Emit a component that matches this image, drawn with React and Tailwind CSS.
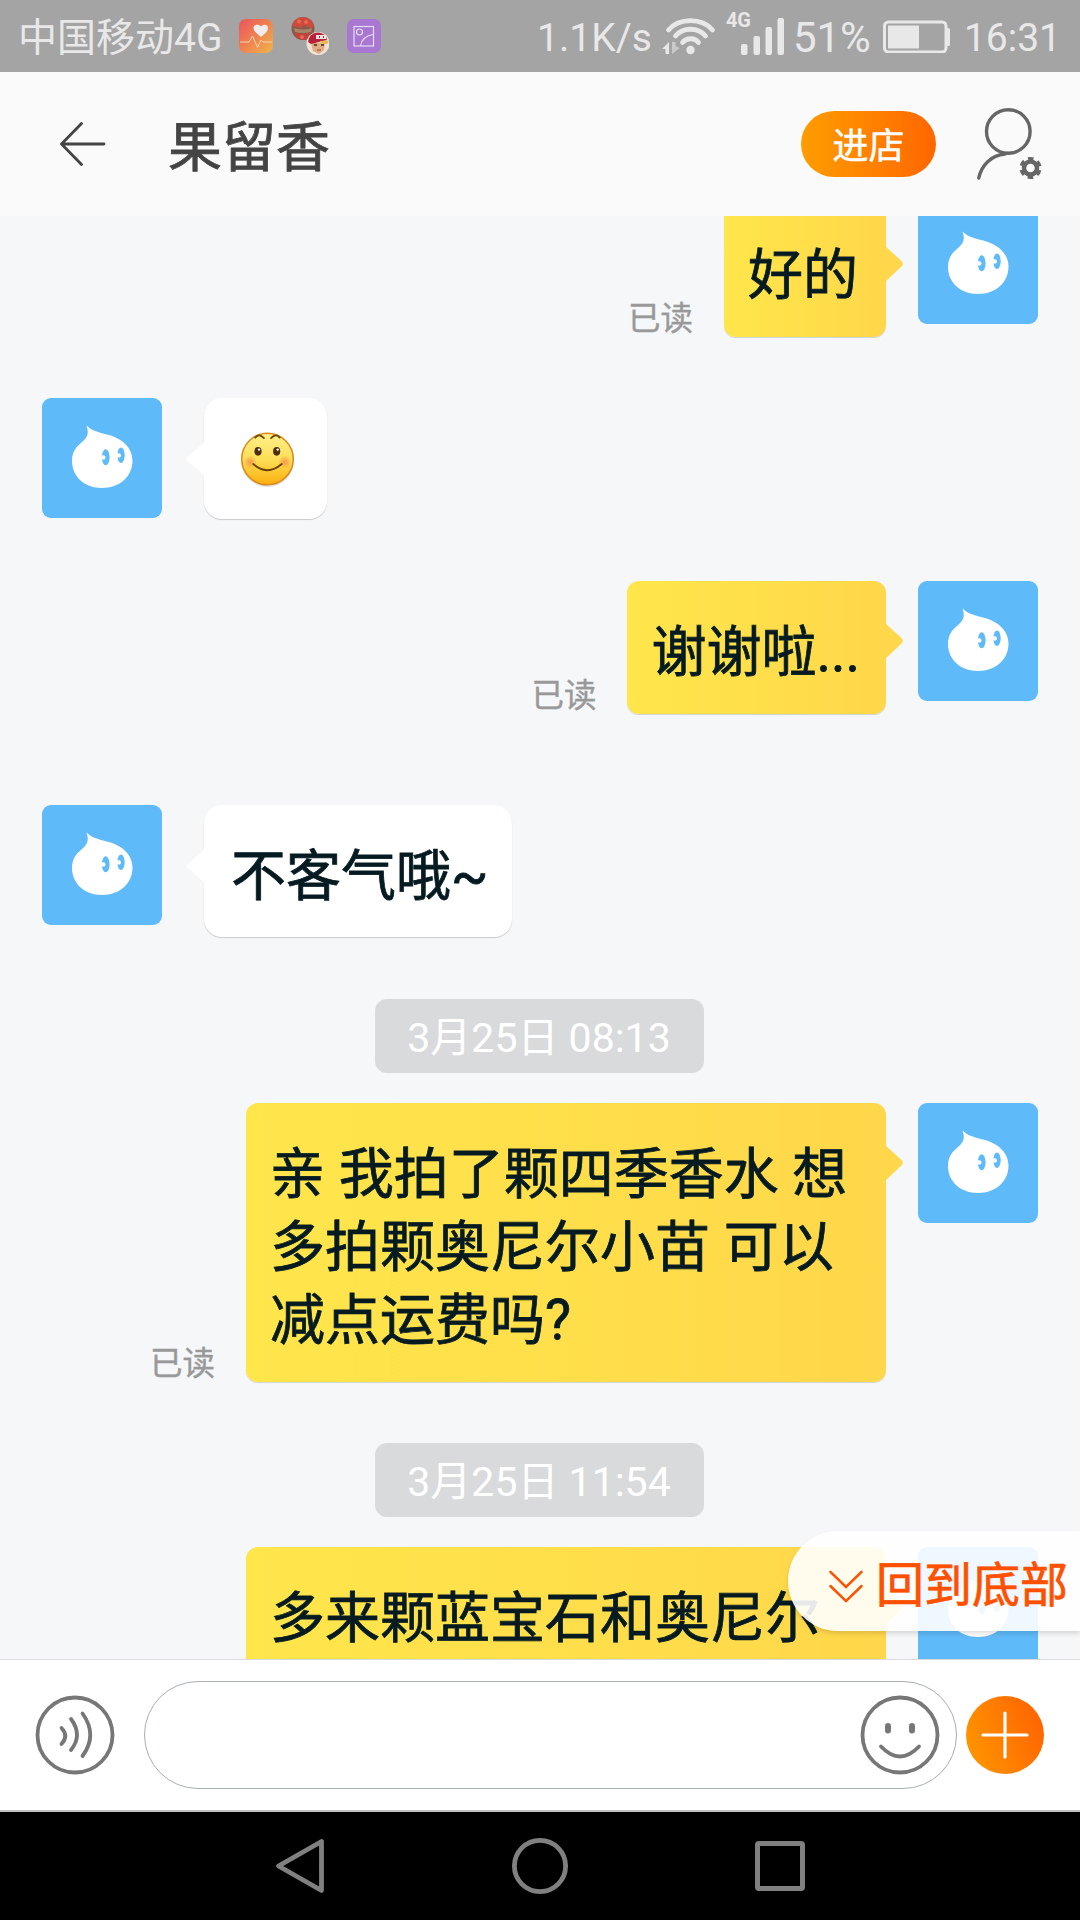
import React from "react";

const MESSAGES = [
  { id: 1, type: "out", text: ["好的"], read: true, gap: "-mt-3" },
  { id: 2, type: "in", emoji: true, gap: "mt-[61px]" },
  { id: 3, type: "out", text: ["谢谢啦..."], read: true, gap: "mt-[62px]" },
  { id: 4, type: "in", text: ["不客气哦~"], gap: "mt-[91px]" },
  { id: 5, type: "time", text: "3月25日 08:13", gap: "mt-[62px]" },
  {
    id: 6,
    type: "out",
    text: ["亲 我拍了颗四季香水 想", "多拍颗奥尼尔小苗 可以", "减点运费吗?"],
    read: true,
    wide: true,
    gap: "mt-[30px]",
  },
  { id: 7, type: "time", text: "3月25日 11:54", gap: "mt-[61px]" },
  { id: 8, type: "out", text: ["多来颗蓝宝石和奥尼尔"], wide: true, gap: "mt-[30px]" },
];

function Avatar() {
  return (
    <svg viewBox="0 0 120 120" className="size-[120px] shrink-0 rounded-[9px] bg-[#5fbaf9]">
      <path
        d="M44.5 27.5C49 32 55 34 63 36C79 39.500 90.500 49 90.500 62.500C90.500 79 77 90 60 90C43 90 30 79 30 63C30 54 34 49 40 44C46 39 47 35 44.500 27.500Z"
        fill="#fff"
      />
      <g fill="#5fbaf9">
        <ellipse cx="63.700" cy="59.300" rx="3.900" ry="8" />
        <ellipse cx="79" cy="57.300" rx="3.700" ry="7.800" />
      </g>
      <g fill="#fff">
        <path d="M58.500 57L62.500 57.500Q64.500 59.500 62.500 61.500L58.500 61.500Z" />
        <path d="M74 55L78 55.500Q80 57.500 78 59.500L74 59.500Z" />
      </g>
    </svg>
  );
}

function SmileEmoji() {
  return (
    <svg viewBox="0 0 54 54" className="mt-0.5 ml-[3px] size-[55px]">
      <defs>
        <linearGradient id="face" x1="0" y1="0" x2="0" y2="1">
          <stop offset="0" stopColor="#fdf08a" />
          <stop offset="0.5" stopColor="#fcdf58" />
          <stop offset="1" stopColor="#fcae0c" />
        </linearGradient>
        <radialGradient id="cheek">
          <stop offset="0" stopColor="#f9874a" stopOpacity="0.8" />
          <stop offset="1" stopColor="#f9874a" stopOpacity="0" />
        </radialGradient>
      </defs>
      <circle cx="27" cy="28" r="26" fill="#000" opacity="0.12" />
      <circle cx="27" cy="26.500" r="25.300" fill="url(#face)" stroke="#dc8a1b" strokeWidth="1.500" />
      <circle cx="10" cy="29.500" r="6.500" fill="url(#cheek)" />
      <circle cx="44" cy="29.500" r="6.500" fill="url(#cheek)" />
      <ellipse cx="17.700" cy="19" rx="3.500" ry="4.300" fill="#4d2d07" />
      <ellipse cx="36" cy="19" rx="3.500" ry="4.300" fill="#4d2d07" />
      <circle cx="18.700" cy="17.300" r="1.200" fill="#fff" />
      <circle cx="37" cy="17.300" r="1.200" fill="#fff" />
      <g fill="none" stroke="#6e4509" strokeLinecap="round">
        <path d="M15 5.500Q18.500 1 23.500 6" strokeWidth="1.800" />
        <path d="M30.500 6Q35.500 1 39 5.500" strokeWidth="1.800" />
        <path d="M13 31.500Q27 43.500 41 31.500" strokeWidth="1.900" />
      </g>
    </svg>
  );
}

function Outgoing({ m }) {
  return (
    <div className={`flex items-start justify-end pr-[42px] ${m.gap}`}>
      {m.read && (
        <span className="mr-[31px] -mb-px self-end text-[32.500px] leading-[38px] text-[#999] [-webkit-text-stroke:0.400px]">
          已读
        </span>
      )}
      <div
        className={`relative mr-8 rounded-xl bg-linear-to-r from-[#ffe64b] to-[#ffd74a] pt-[35px] pr-[26px] pb-[25px] pl-6 shadow-[0_1px_1px_rgba(0,0,0,0.15)] ${
          m.wide ? "w-[640px]" : "min-w-[162px]"
        }`}
      >
        {m.text.map((line) => (
          <p
            key={line}
            className="text-[55px] leading-[73px] whitespace-nowrap text-[#051b21] [-webkit-text-stroke:0.800px]"
          >
            {line}
          </p>
        ))}
        <svg viewBox="0 0 18 36" className="absolute top-[42px] -right-[17px] h-9 w-[18px]">
          <path d="M0 0L16.500 15Q19 18 16.500 20.500L0 36Z" fill="#ffd74a" />
        </svg>
      </div>
      <Avatar />
    </div>
  );
}

function Incoming({ m }) {
  return (
    <div className={`flex items-start pl-[42px] ${m.gap}`}>
      <Avatar />
      <div
        className={`relative ml-[42px] rounded-[18px] bg-white shadow-[0_1px_1px_rgba(0,0,0,0.18)] ${
          m.emoji
            ? "flex h-[121px] w-[123px] items-center justify-center"
            : "h-[132px] w-[308px] pt-[35px] pl-[27px]"
        }`}
      >
        {m.emoji ? (
          <SmileEmoji />
        ) : (
          <p className="text-[55px] leading-[73px] whitespace-nowrap text-[#051b21] [-webkit-text-stroke:0.800px]">
            {m.text}
          </p>
        )}
        <svg viewBox="0 0 19 34" className="absolute top-11 -left-[18px] h-[34px] w-[19px]">
          <path d="M19 0L1 15.500Q0 17 1 18.500L19 34Z" fill="#fff" />
        </svg>
      </div>
    </div>
  );
}

function TimeStamp({ m }) {
  return (
    <div className={`flex justify-center pr-0.5 ${m.gap}`}>
      <span className="h-[74px] w-[329px] rounded-xl bg-[#d9dadc] pt-px text-center text-[41px] leading-[76px] whitespace-nowrap text-white">
        {m.text}
      </span>
    </div>
  );
}

function StatusBar() {
  return (
    <div className="flex h-[72px] shrink-0 items-center bg-[#a4a4a4] text-[#e8e8e8]">
      <span className="ml-[18px] w-[221px] pt-[5px] text-[39px] leading-[67px] whitespace-nowrap">中国移动4G</span>
      <svg viewBox="0 0 34 34" className="size-[34px]">
        <defs>
          <linearGradient id="health" x1="0" y1="0" x2="1" y2="1">
            <stop offset="0" stopColor="#e9535d" />
            <stop offset="0.5" stopColor="#ef8350" />
            <stop offset="1" stopColor="#efb44b" />
          </linearGradient>
        </defs>
        <rect width="34" height="34" rx="7" fill="url(#health)" />
        <path d="M22 18C17 14 14.500 12 14.500 8.800C14.500 5.500 19.500 4.500 22 7.500C24.500 4.500 29 5.500 29 8.800C29 12 27 14 22 18Z" fill="#eee" />
        <path d="M1 23H10L13.500 17L18.500 28.500L22 21L24 23H33" fill="none" stroke="#f8d3ae" strokeWidth="1" />
      </svg>
      <svg viewBox="0 0 38 38" className="ml-[18px] size-[38px]">
        <circle cx="12" cy="11.500" r="11.500" fill="#8a5b49" />
        <path d="M1 9Q3 1 12 0Q21 1 23 9L19 11L14 8L9 11L4 9Z" fill="#cf4a3c" />
        <path d="M3 18L8 15L12 18L17 15L20 19Q12 27 3 18Z" fill="#c5413a" />
        <path d="M3 11Q12 14 21 11L20 15Q12 17 4 15Z" fill="#a88569" />
        <g fill="#e96a51">
          <circle cx="8" cy="4.500" r="2" />
          <circle cx="15" cy="5" r="2" />
          <circle cx="11" cy="20" r="2" />
        </g>
        <circle cx="27" cy="26.500" r="11.500" fill="#eee3d4" />
        <path d="M20 26H34L33 33L28 37L22 34Z" fill="#e3ab83" />
        <path d="M17 25Q18 16 27 15.500Q35 16 36 23L20 27Z" fill="#b8213a" />
        <path d="M29 24L38 23.500L36 27L30 27Z" fill="#e8b957" />
        <path d="M25 20H35" stroke="#f3e5e0" strokeWidth="4" />
        <path d="M28 20H29M32 20H33" stroke="#b8213a" strokeWidth="2" />
        <path d="M23 28H26M30 28H33" stroke="#43281f" strokeWidth="1.500" />
        <path d="M26 33H30" stroke="#9a5140" />
      </svg>
      <svg viewBox="0 0 34 34" className="ml-[18px] size-[34px]" fill="none" stroke="#eadcf4" strokeWidth="1.200">
        <rect width="34" height="34" rx="7" fill="#a777d2" stroke="none" />
        <rect x="7" y="7.500" width="19.500" height="19.500" />
        <circle cx="12.500" cy="13" r="3" />
        <path d="M13.500 27Q15 17 26.500 15.500" />
      </svg>

      <span className="ml-auto pt-1 text-[39px] leading-[68px]">1.1K/s</span>
      <svg viewBox="0 0 54 38" className="ml-[10px] h-[38px] w-[54px]" fill="none" stroke="#e8e8e8" strokeWidth="4.800" strokeLinecap="round">
        <path d="M6.500 13C17 .5 40 .5 50.500 13" />
        <path d="M13.500 19C21 10 36 10 43.500 19" />
        <path d="M20.500 25.500C24.500 20.500 33 20.500 36.500 25.500" />
        <circle cx="28.500" cy="33" r="4.200" fill="#e8e8e8" stroke="none" />
        <path d="M7 25V37H3.500V32H0Z" fill="#e8e8e8" stroke="none" />
        <path d="M10 37V25H13.500V29L17.500 31Z" fill="#cacaca" stroke="none" />
      </svg>
      <div className="ml-[10px] flex h-[43px] w-[59px] items-start self-start pt-3">
        <span className="w-[15px] text-[20px] leading-[17px] font-bold">4G</span>
        <svg viewBox="0 0 44 37" className="mt-[6px] h-[37px] w-11 shrink-0" fill="#e8e8e8">
          <rect x="0" y="26" width="6.500" height="11" rx="2" />
          <rect x="12.500" y="18" width="6.500" height="19" rx="2" />
          <rect x="24.500" y="9" width="6.500" height="28" rx="2" />
          <rect x="36.500" y="0" width="6.500" height="37" rx="2" />
        </svg>
      </div>
      <span className="ml-2 pt-1 text-[42px] leading-[68px]">51%</span>
      <svg viewBox="0 0 67 34" className="ml-3 h-[34px] w-[67px]" fill="#e8e8e8">
        <rect x="1.500" y="3" width="61.500" height="30" rx="4" fill="none" stroke="#e8e8e8" strokeWidth="3" />
        <rect x="5" y="6.500" width="31" height="23" />
        <rect x="63" y="9" width="4" height="18" rx="1.500" />
      </svg>
      <span className="mr-[19px] ml-[14px] pt-1 text-[39px] leading-[68px]">16:31</span>
    </div>
  );
}

function Header() {
  return (
    <header className="flex h-36 shrink-0 items-center bg-[#fafafa]">
      <svg viewBox="0 0 46 44" className="ml-[60px] h-11 w-[46px]" fill="none" stroke="#444" strokeWidth="2.800" strokeLinecap="round" strokeLinejoin="round">
        <path d="M21.500 1.500L1.500 22L21.500 42.500M1.500 22H44" />
      </svg>
      <h1 className="ml-[62px] pt-[9px] text-[54px] leading-[72px] text-[#444] [-webkit-text-stroke:0.800px]">果留香</h1>
      <button className="ml-auto h-[66px] w-[135px] rounded-full bg-linear-to-r from-[#ff9c00] to-[#ff6600] pt-[3px] text-[36px] leading-[66px] text-white [-webkit-text-stroke:0.500px]">
        进店
      </button>
      <svg viewBox="0 0 66 74" className="mr-[37px] ml-[41px] h-[74px] w-[66px]" fill="none" stroke="#666" strokeWidth="3.400" strokeLinecap="round">
        <circle cx="31.300" cy="24.500" r="21.800" />
        <path d="M28 47C14 48.500 4.500 58 1.800 71" />
        <circle cx="53.500" cy="61" r="6.500" strokeWidth="4.500" />
        <circle cx="53.500" cy="61" r="9.500" strokeWidth="3.200" strokeDasharray="5.500 4.448" strokeDashoffset="-2.200" strokeLinecap="butt" />
      </svg>
    </header>
  );
}

function InputBar() {
  return (
    <div className="flex h-[153px] shrink-0 items-center border-t border-b-2 border-t-[#d8dadc] border-b-[#c0c0c0] bg-white pl-[35px]">
      <svg viewBox="0 0 80 80" className="size-20" fill="none" stroke="#777" strokeWidth="3.800" strokeLinecap="round">
        <circle cx="40" cy="40" r="37.500" />
        <path d="M26.500 33Q34 41 26.500 49" />
        <path d="M36 24Q48 40 36 55" />
        <path d="M47.500 18.500Q63 40 47.500 61" />
      </svg>
      <div className="ml-[29px] flex h-[108px] w-[813px] items-center justify-end rounded-full border border-[#a8adb0] pr-4">
        <svg viewBox="0 0 80 80" className="size-20" fill="none" stroke="#777" strokeWidth="3.800" strokeLinecap="round">
          <circle cx="40" cy="40" r="37.500" />
          <path d="M28 31V35.500M52 31V35.500" strokeWidth="6" />
          <path d="M21 51.500Q40 71.500 59 51.500" />
        </svg>
      </div>
      <svg viewBox="0 0 78 78" className="ml-[9px] size-[78px]">
        <defs>
          <linearGradient id="plus" x1="0" y1="0.700" x2="1" y2="0.300">
            <stop offset="0" stopColor="#ff9500" />
            <stop offset="1" stopColor="#ff6400" />
          </linearGradient>
        </defs>
        <circle cx="39" cy="39" r="39" fill="url(#plus)" />
        <path d="M17 39H61M39 17V61" stroke="#fff" strokeWidth="3.200" strokeLinecap="round" />
      </svg>
    </div>
  );
}

function NavBar() {
  return (
    <nav className="flex h-[108px] shrink-0 items-center bg-black pl-[275px]">
      <svg viewBox="0 0 50 56" className="h-14 w-[50px]" fill="none" stroke="#808080" strokeWidth="4.800" strokeLinejoin="round">
        <path d="M46.500 3.500V52.500L3.500 28Z" />
      </svg>
      <svg viewBox="0 0 56 56" className="ml-[187px] size-14" fill="none" stroke="#808080" strokeWidth="4.800">
        <circle cx="28" cy="28" r="25.600" />
      </svg>
      <div className="ml-[187px] size-[50px] rounded-[4px] border-[5px] border-[#808080]" />
    </nav>
  );
}

export default function App() {
  return (
    <div className="flex h-[1920px] w-[1080px] flex-col overflow-hidden bg-[#f5f7f9] font-[Roboto,'Noto_Sans_CJK_SC',sans-serif]">
      <StatusBar />
      <Header />
      <main className="relative flex min-h-0 flex-1 flex-col overflow-hidden">
        {MESSAGES.map((m) => {
          if (m.type === "time") return <TimeStamp key={m.id} m={m} />;
          if (m.type === "in") return <Incoming key={m.id} m={m} />;
          return <Outgoing key={m.id} m={m} />;
        })}

        <button className="absolute right-0 bottom-7 flex h-[100px] w-[292px] items-center rounded-l-full bg-white/90 pt-[9px] pl-10 text-[#ff5000] shadow-[0_3px_5px_rgba(0,0,0,0.12)]">
          <svg viewBox="0 0 36 36" className="h-[34px] w-9" fill="none" stroke="#ff5000" strokeWidth="2.600" strokeLinecap="round">
            <path d="M1.500 3L18 19L34.500 3M1.500 18L18 34L34.500 18" />
          </svg>
          <span className="ml-[12px] text-[48px] leading-[92px] whitespace-nowrap [-webkit-text-stroke:0.700px]">回到底部</span>
        </button>
      </main>
      <InputBar />
      <NavBar />
    </div>
  );
}
